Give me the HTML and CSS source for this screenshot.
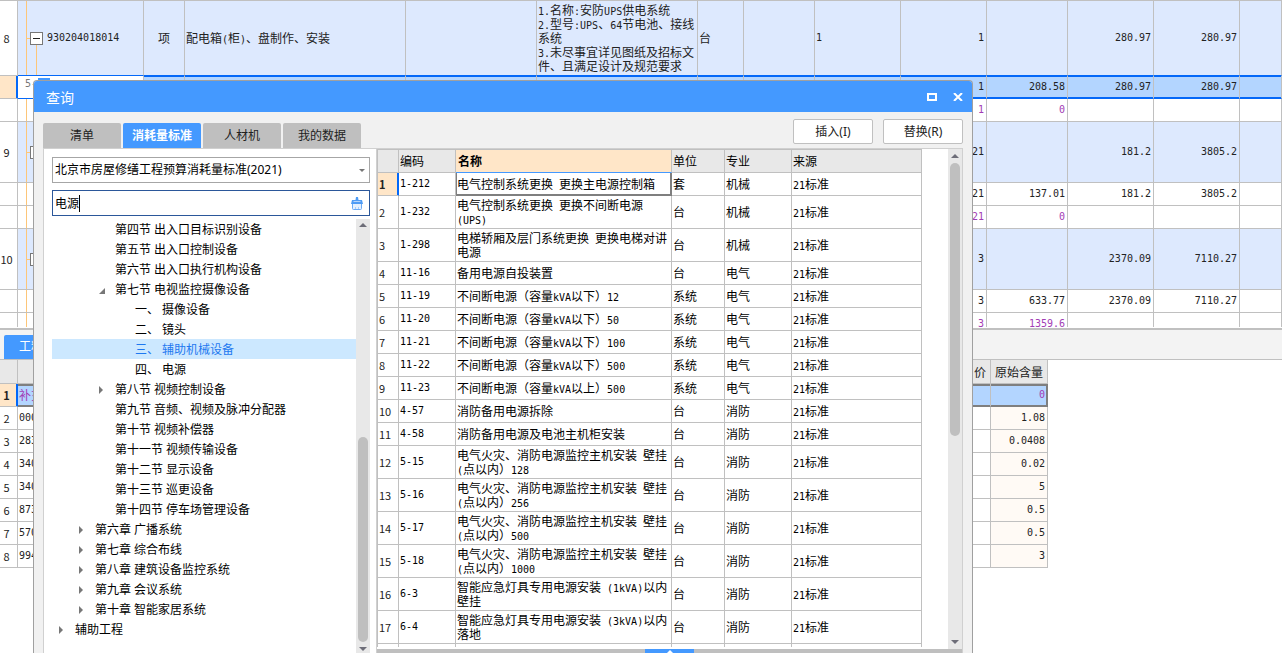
FILE: index.html
```html
<!DOCTYPE html>
<html lang="zh-CN">
<head>
<meta charset="utf-8">
<title>查询</title>
<link rel="stylesheet" href="styles.css">
</head>
<body>
<main class="workspace">
  <section class="upper">
    <table class="sheet">
      <colgroup><col class="w-idx"><col class="w-code"><col class="w-type"><col class="w-name"><col class="w-blank"><col class="w-desc"><col class="w-unit"><col class="w-spec"><col class="w-qty"><col class="w-qty"><col class="w-price"><col class="w-qty"><col class="w-qty"><col></colgroup>
      <tbody>
        <tr class="group tall"><td class="idx">8</td><td class="code num"><span class="minus"></span>930204018014</td><td class="mid">项</td><td>配电箱<span class="num">(</span>柜<span class="num">)</span>、盘制作、安装</td><td></td><td class="desc"><span class="num">1.</span>名称<span class="num">:</span>安防<span class="num">UPS</span>供电系统<br><span class="num">2.</span>型号<span class="num">:UPS</span>、<span class="num">64</span>节电池、接线<br>系统<br><span class="num">3.</span>未尽事宜详见图纸及招标文<br>件、且满足设计及规范要求</td><td>台</td><td></td><td class="num">1</td><td class="val">1</td><td class="val"></td><td class="val">280.97</td><td class="val">280.97</td><td></td></tr>
        <tr class="current"><td class="idx"></td><td class="edit num">5-<span class="mark"></span></td><td></td><td></td><td></td><td></td><td></td><td></td><td></td><td class="val">1</td><td class="val">208.58</td><td class="val">280.97</td><td class="val">280.97</td><td></td></tr>
        <tr><td class="idx"></td><td class="code"></td><td></td><td></td><td></td><td></td><td></td><td></td><td></td><td class="val extra">1</td><td class="val extra">0</td><td></td><td></td><td></td></tr>
        <tr class="group medium"><td class="idx">9</td><td class="code"><span class="minus"></span></td><td></td><td></td><td></td><td></td><td></td><td></td><td></td><td class="val">21</td><td></td><td class="val">181.2</td><td class="val">3805.2</td><td></td></tr>
        <tr><td class="idx"></td><td class="code"></td><td></td><td></td><td></td><td></td><td></td><td></td><td></td><td class="val">21</td><td class="val">137.01</td><td class="val">181.2</td><td class="val">3805.2</td><td></td></tr>
        <tr><td class="idx"></td><td class="code"></td><td></td><td></td><td></td><td></td><td></td><td></td><td></td><td class="val extra">21</td><td class="val extra">0</td><td></td><td></td><td></td></tr>
        <tr class="group medium"><td class="idx">10</td><td class="code"><span class="minus"></span></td><td></td><td></td><td></td><td></td><td></td><td></td><td></td><td class="val">3</td><td></td><td class="val">2370.09</td><td class="val">7110.27</td><td></td></tr>
        <tr><td class="idx"></td><td class="code"></td><td></td><td></td><td></td><td></td><td></td><td></td><td></td><td class="val">3</td><td class="val">633.77</td><td class="val">2370.09</td><td class="val">7110.27</td><td></td></tr>
        <tr><td class="idx"></td><td class="code"></td><td></td><td></td><td></td><td></td><td></td><td></td><td></td><td class="val extra">3</td><td class="val extra">1359.6</td><td></td><td></td><td></td></tr>
      </tbody>
    </table>
  </section>
  <section class="lower">
    <div class="lower-tabs"><button class="lower-tab">工料机显示</button></div>
    <table class="detail">
      <colgroup><col class="w-idx"><col><col class="w-cost"><col class="w-content"></colgroup>
      <thead><tr><th class="idx"></th><th></th><th>价</th><th>原始含量</th></tr></thead>
      <tbody>
        <tr class="picked"><td class="idx">1</td><td class="extra">补充</td><td></td><td class="val extra">0</td></tr>
        <tr><td class="idx">2</td><td class="num">000</td><td></td><td class="val">1.08</td></tr>
        <tr><td class="idx">3</td><td class="num">283</td><td></td><td class="val">0.0408</td></tr>
        <tr><td class="idx">4</td><td class="num">340</td><td></td><td class="val">0.02</td></tr>
        <tr><td class="idx">5</td><td class="num">340</td><td></td><td class="val">5</td></tr>
        <tr><td class="idx">6</td><td class="num">873</td><td></td><td class="val">0.5</td></tr>
        <tr><td class="idx">7</td><td class="num">570</td><td></td><td class="val">0.5</td></tr>
        <tr><td class="idx">8</td><td class="num">994</td><td></td><td class="val">3</td></tr>
      </tbody>
    </table>
  </section>
</main>

<section class="dialog" role="dialog" aria-labelledby="dialog-title">
  <header class="titlebar">
    <h1 id="dialog-title">查询</h1>
    <button class="win-btn" aria-label="最大化"><svg width="10" height="8" viewBox="0 0 10 8"><path d="M1 1H9V7H1Z" fill="none" stroke="#fff" stroke-width="2"/></svg></button>
    <button class="win-btn" aria-label="关闭"><svg width="10" height="8" viewBox="0 0 10 8"><path d="M1 0L9 8M9 0L1 8" stroke="#fff" stroke-width="2"/></svg></button>
  </header>
  <div class="toolbar">
    <nav class="tabs"><button class="tab">清单</button><button class="tab active">消耗量标准</button><button class="tab">人材机</button><button class="tab">我的数据</button></nav>
    <div class="actions"><button class="action">插入(I)</button><button class="action">替换(R)</button></div>
  </div>
  <div class="content">
    <aside class="side">
      <div class="picker">
        <select class="library" aria-label="标准库"><option>北京市房屋修缮工程预算消耗量标准(2021)</option></select>
        <svg class="chevron" width="6" height="3" viewBox="0 0 6 3"><path d="M0 0H6L3 3Z" fill="#777"/></svg>
      </div>
      <div class="search">
        <input type="text" value="电源" aria-label="搜索"><span class="caret"></span>
        <button class="clear" aria-label="清除"><svg width="12" height="13" viewBox="0 0 12 13"><path d="M5 0H7L7.500 3H11L12 7H0L1 3H4.500Z" fill="#4f9cf5"/><path d="M2.500 4.500H9.500" stroke="#b4d4fb"/><path d="M1.500 7V11.500Q1.500 12.500 2.500 12.500H9.500Q10.500 12.500 10.500 11.500V7" fill="#e4f0fe" stroke="#6aaaf6"/><path d="M4.500 12V10M7.500 12V10" stroke="#a9cdfb"/></svg></button>
      </div>
      <div class="tree-pane">
        <ul class="tree">
          <li class="l3">第四节 出入口目标识别设备</li>
          <li class="l3">第五节 出入口控制设备</li>
          <li class="l3">第六节 出入口执行机构设备</li>
          <li class="l3 open">第七节 电视监控摄像设备</li>
          <li class="l4">一、 摄像设备</li>
          <li class="l4">二、 镜头</li>
          <li class="l4 chosen">三、 辅助机械设备</li>
          <li class="l4">四、 电源</li>
          <li class="l3 shut">第八节 视频控制设备</li>
          <li class="l3">第九节 音频、视频及脉冲分配器</li>
          <li class="l3">第十节 视频补偿器</li>
          <li class="l3">第十一节 视频传输设备</li>
          <li class="l3">第十二节 显示设备</li>
          <li class="l3">第十三节 巡更设备</li>
          <li class="l3">第十四节 停车场管理设备</li>
          <li class="l2 shut">第六章 广播系统</li>
          <li class="l2 shut">第七章 综合布线</li>
          <li class="l2 shut">第八章 建筑设备监控系统</li>
          <li class="l2 shut">第九章 会议系统</li>
          <li class="l2 shut">第十章 智能家居系统</li>
          <li class="l1 shut">辅助工程</li>
        </ul>
        <div class="scroll tree-scroll"><i class="up"></i><i class="gap"></i><i class="thumb"></i><i class="down"></i></div>
      </div>
    </aside>
    <div class="results">
      <div class="result-pane">
        <div class="result-view">
          <table class="grid">
            <colgroup><col class="g-idx"><col class="g-code"><col class="g-name"><col class="g-unit"><col class="g-major"><col></colgroup>
            <thead><tr><th></th><th>编码</th><th class="sorted">名称</th><th>单位</th><th>专业</th><th>来源</th></tr></thead>
            <tbody>
              <tr class="focus"><td class="idx">1</td><td class="num">1-212</td><td>电气控制系统更换&ensp;更换主电源控制箱</td><td>套</td><td>机械</td><td><span class="num">21</span>标准</td></tr>
              <tr class="double"><td class="idx">2</td><td class="num">1-232</td><td>电气控制系统更换&ensp;更换不间断电源<br><span class="num">(UPS)</span></td><td>台</td><td>机械</td><td><span class="num">21</span>标准</td></tr>
              <tr class="double"><td class="idx">3</td><td class="num">1-298</td><td>电梯轿厢及层门系统更换&ensp;更换电梯对讲<br>电源</td><td>台</td><td>机械</td><td><span class="num">21</span>标准</td></tr>
              <tr><td class="idx">4</td><td class="num">11-16</td><td>备用电源自投装置</td><td>台</td><td>电气</td><td><span class="num">21</span>标准</td></tr>
              <tr><td class="idx">5</td><td class="num">11-19</td><td>不间断电源（容量<span class="num">kVA</span>以下）<span class="num">12</span></td><td>系统</td><td>电气</td><td><span class="num">21</span>标准</td></tr>
              <tr><td class="idx">6</td><td class="num">11-20</td><td>不间断电源（容量<span class="num">kVA</span>以下）<span class="num">50</span></td><td>系统</td><td>电气</td><td><span class="num">21</span>标准</td></tr>
              <tr><td class="idx">7</td><td class="num">11-21</td><td>不间断电源（容量<span class="num">kVA</span>以下）<span class="num">100</span></td><td>系统</td><td>电气</td><td><span class="num">21</span>标准</td></tr>
              <tr><td class="idx">8</td><td class="num">11-22</td><td>不间断电源（容量<span class="num">kVA</span>以下）<span class="num">500</span></td><td>系统</td><td>电气</td><td><span class="num">21</span>标准</td></tr>
              <tr><td class="idx">9</td><td class="num">11-23</td><td>不间断电源（容量<span class="num">kVA</span>以上）<span class="num">500</span></td><td>系统</td><td>电气</td><td><span class="num">21</span>标准</td></tr>
              <tr><td class="idx">10</td><td class="num">4-57</td><td>消防备用电源拆除</td><td>台</td><td>消防</td><td><span class="num">21</span>标准</td></tr>
              <tr><td class="idx">11</td><td class="num">4-58</td><td>消防备用电源及电池主机柜安装</td><td>台</td><td>消防</td><td><span class="num">21</span>标准</td></tr>
              <tr class="double"><td class="idx">12</td><td class="num">5-15</td><td>电气火灾、消防电源监控主机安装&ensp;壁挂<br><span class="num">(</span>点以内）<span class="num">128</span></td><td>台</td><td>消防</td><td><span class="num">21</span>标准</td></tr>
              <tr class="double"><td class="idx">13</td><td class="num">5-16</td><td>电气火灾、消防电源监控主机安装&ensp;壁挂<br><span class="num">(</span>点以内）<span class="num">256</span></td><td>台</td><td>消防</td><td><span class="num">21</span>标准</td></tr>
              <tr class="double"><td class="idx">14</td><td class="num">5-17</td><td>电气火灾、消防电源监控主机安装&ensp;壁挂<br><span class="num">(</span>点以内）<span class="num">500</span></td><td>台</td><td>消防</td><td><span class="num">21</span>标准</td></tr>
              <tr class="double"><td class="idx">15</td><td class="num">5-18</td><td>电气火灾、消防电源监控主机安装&ensp;壁挂<br><span class="num">(</span>点以内）<span class="num">1000</span></td><td>台</td><td>消防</td><td><span class="num">21</span>标准</td></tr>
              <tr class="double"><td class="idx">16</td><td class="num">6-3</td><td>智能应急灯具专用电源安装<span class="num"> (1kVA)</span>以内<br>壁挂</td><td>台</td><td>消防</td><td><span class="num">21</span>标准</td></tr>
              <tr class="double"><td class="idx">17</td><td class="num">6-4</td><td>智能应急灯具专用电源安装<span class="num"> (3kVA)</span>以内<br>落地</td><td>台</td><td>消防</td><td><span class="num">21</span>标准</td></tr>
              <tr class="double"><td class="idx"></td><td></td><td>智能应急灯具专用电源安装<span class="num"> (5kVA)</span>以内<br>落地</td><td></td><td></td><td></td></tr>
            </tbody>
          </table>
        </div>
        <div class="scroll grid-scroll"><i class="up"></i><i class="thumb"></i><i class="gap"></i><i class="down"></i></div>
      </div>
      <div class="splitter"><button class="expander" aria-label="展开"><svg width="6" height="3" viewBox="0 0 6 3"><path d="M3 0L6 3H0Z" fill="#fff"/></svg></button></div>
    </div>
  </div>
</section>
</body>
</html>
```
FILE: styles.css
```css
* { box-sizing: border-box; }

html, body { height: 100%; }

body {
  margin: 0;
  overflow: hidden;
  background: #fff;
  color: #222;
  font-family: "Noto Sans", "Noto Sans CJK SC", sans-serif;
  font-size: 12px;
  line-height: 14px;
}

button, input, select { font: inherit; }

button { padding: 0; border: 0; }

table {
  border-collapse: separate;
  border-spacing: 0;
  table-layout: fixed;
  font-family: "Noto Sans CJK SC", sans-serif;
}

th, td {
  height: 23px;
  padding: 0 1px;
  border: solid #c0c0c0;
  border-width: 0 1px 1px 0;
  font-weight: normal;
  text-align: left;
  white-space: nowrap;
  overflow: hidden;
}

.num, .val {
  font-family: "DejaVu Sans Mono", monospace;
  font-size: 10px;
}

span.num { line-height: 10px; }

.val {
  padding-right: 2px;
  text-align: right;
}
.extra { color: #a23cb5; }

/* Main worksheet */
.workspace {
  display: flex;
  flex-direction: column;
  height: 100%;
}

.upper {
  flex: 1;
  min-height: 0;
  overflow: hidden;
  border-top: 1px solid #c0c0c0;
}

.sheet { width: 100%; }
.w-idx { width: 18px; }
.w-code { width: 126px; }
.w-type { width: 41px; }
.w-name { width: 221px; }
.w-blank { width: 131px; }
.w-desc { width: 161px; }
.w-unit { width: 46px; }
.w-spec { width: 71px; }
.w-qty { width: 86px; }
.w-price { width: 81px; }
.sheet .mid { text-align: center; }
.sheet .idx, .detail .idx {
  padding: 0 4px 0 0;
  font-size: 11px;
  text-align: center;
}
.tall td { height: 75px; }
.medium td { height: 61px; }
.group td { background: #dde9fe; }
.group .idx { background: #fff; }
.tall td:not(.idx) { border-bottom-color: #0468f8; }

.code { position: relative; }
.sheet .code { padding-left: 29px; }
.code::before {
  content: "";
  position: absolute;
  left: 8px;
  top: 0;
  bottom: -1px;
  width: 1px;
  background: #fdc679;
}
.minus {
  position: absolute;
  left: 12px;
  top: 50%;
  width: 13px;
  height: 13px;
  margin-top: -6px;
  border: 1px solid #777;
  background: linear-gradient(#222, #222) 2px 5px / 7px 1px no-repeat #fff;
}
.minus::before {
  content: "";
  position: absolute;
  right: 12px;
  top: 5px;
  width: 3px;
  height: 1px;
  background: #fdc679;
}
.minus::after {
  content: "";
  position: absolute;
  left: 5px;
  top: 12px;
  width: 1px;
  height: 31px;
  background: #fdc679;
}

.current td {
  background: #b3d5ff;
  border-bottom-color: #0468f8;
  box-shadow: inset 0 1px #0468f8, inset 0 -1px #0468f8;
}
.current .idx {
  background: #ffe6c8;
  border-right-color: #0468f8;
  border-bottom-color: #c0c0c0;
  box-shadow: inset -1px 0 #0468f8;
}
.current .edit {
  position: relative;
  padding: 0 0 6px 7px;
  background: #fff;
  color: #777;
  box-shadow: none;
}
.mark {
  position: absolute;
  left: 20px;
  top: 2px;
  width: 12px;
  height: 3px;
  background: #4499ff;
}

.lower {
  flex: 0 0 326px;
  border-top: 1px solid #fff;
}
.lower-tabs {
  height: 32px;
  padding: 5px 0 0 4px;
  border-top: 2px solid #c0c0c0;
  border-bottom: 1px solid #c0c0c0;
  background: #f3f3f3;
}
.lower-tab {
  width: 90px;
  height: 24px;
  border-radius: 2px 2px 0 0;
  background: #4499ff;
  color: #fff;
}
.detail { width: calc(100% - 234px); }
.w-cost { width: 60px; }
.w-content { width: 57px; }
.detail th {
  height: 24px;
  padding: 0 4px;
  background: #e8e8e8;
  text-align: right;
}
.detail .val { background: #fffaf5; }
.picked td, .detail .picked .val {
  background: #b3d5ff;
  border-bottom-color: #7f7f7f;
  box-shadow: inset 0 2px #7f7f7f, inset 0 -1px #7f7f7f;
}
.detail .picked td:last-child {
  border-right-color: #7f7f7f;
  box-shadow: inset 0 2px #7f7f7f, inset -1px -1px #7f7f7f;
}
.picked .idx, .focus .idx {
  background: #ffe6c8;
  border-right-color: #0468f8;
  border-bottom-color: #c0c0c0;
  box-shadow: inset -1px 0 #0468f8;
  font-weight: bold;
}

/* Query dialog */
.dialog {
  position: absolute;
  left: 33px;
  right: 309px;
  top: 80px;
  bottom: 0;
  display: flex;
  flex-direction: column;
  border: solid #a0a0a0;
  border-width: 1px 1px 0;
  border-radius: 4px 4px 0 0;
  background: #f1f1f1;
  overflow: hidden;
}
.titlebar {
  display: flex;
  align-items: center;
  gap: 16px;
  height: 31px;
  padding: 0 9px 0 12px;
  background: #4499ff;
}
.titlebar h1 {
  flex: 1;
  margin: 0;
  padding-top: 2px;
  color: #fff;
  font-size: 14px;
  font-weight: normal;
  line-height: 20px;
}
.win-btn {
  display: flex;
  background: none;
}
.toolbar {
  display: flex;
  justify-content: space-between;
  height: 36px;
  padding: 7px 9px 0;
}
.tabs {
  display: flex;
  align-items: flex-end;
  gap: 2px;
}
.tab {
  width: 78px;
  height: 25px;
  border-radius: 2px 2px 0 0;
  background: #bfbfbf;
  color: #222;
}
.tab.active {
  background: #4499ff;
  color: #fff;
  font-weight: bold;
}
.actions {
  display: flex;
  gap: 10px;
}
.action {
  width: 80px;
  height: 25px;
  border: 1px solid #c0c0c0;
  border-radius: 2px;
  background: #fff;
  color: #222;
}

.content {
  flex: 1;
  display: flex;
  min-height: 0;
  margin: 0 9px;
  border: solid #d0d0d0;
  border-width: 1px 1px 0;
  background: #fff;
}
.side {
  display: flex;
  flex-direction: column;
  width: 332px;
  padding: 8px 6px 0 8px;
  color: #000;
}
.picker, .search {
  position: relative;
  flex: none;
}
.library {
  display: block;
  width: 100%;
  height: 26px;
  padding: 0 2px;
  appearance: none;
  border: 1px solid #a6a6a6;
  border-radius: 0;
  background: #fff;
  color: #000;
}
.chevron {
  position: absolute;
  right: 5px;
  top: 12px;
}
.search {
  margin: 7px 0 3px;
}
.search input {
  display: block;
  width: 100%;
  height: 26px;
  padding: 0 24px 0 2px;
  border: 1px solid #2b579a;
  outline: 0;
  color: #000;
}
.caret {
  position: absolute;
  left: 27px;
  top: 5px;
  width: 1px;
  height: 17px;
  background: #000;
}
.clear {
  position: absolute;
  right: 7px;
  top: 7px;
  display: flex;
  background: none;
}

.tree-pane {
  flex: 1;
  display: flex;
  min-height: 0;
  overflow: hidden;
}
.tree {
  flex: 1;
  margin: 0;
  padding: 0;
  list-style: none;
  line-height: 20px;
}
.tree li {
  height: 20px;
  padding-top: 1px;
}
.tree .l1 { padding-left: 23px; }
.tree .l2 { padding-left: 43px; }
.tree .l3 { padding-left: 63px; }
.tree .l4 { padding-left: 83px; }
.tree .chosen {
  background: #cce8ff;
  color: #1e78f0;
}
.shut::before, .open::before {
  content: "";
  display: inline-block;
  width: 4px;
  height: 8px;
  margin: 0 12px 0 -16px;
  background: #777;
  clip-path: polygon(0 0, 100% 50%, 0 100%);
}
.open::before {
  width: 6px;
  height: 6px;
  margin: 0 10px 0 -16px;
  clip-path: polygon(100% 0, 100% 100%, 0 100%);
}

.scroll {
  display: flex;
  flex-direction: column;
  align-items: center;
  flex: none;
  width: 14px;
  background: #e8e8e8;
}
.scroll .up, .scroll .down {
  flex: none;
  width: 8px;
  height: 4px;
  margin: 4px 0 5px;
  background: #6d6d78;
  clip-path: polygon(50% 0, 100% 100%, 0 100%);
}
.scroll .down {
  margin: 5px 0 2px;
  clip-path: polygon(0 0, 100% 0, 50% 100%);
}
.grid-scroll .up { margin-top: 5px; }
.grid-scroll .down { margin-bottom: 5px; }
.thumb {
  flex: 1;
  width: 10px;
  border-radius: 5px;
  background: #bfbfbf;
}
.gap { flex: 1; }
.grid-scroll .thumb { flex-grow: 11; }
.grid-scroll .gap { flex-grow: 8; }

.results {
  flex: 1;
  display: flex;
  flex-direction: column;
  min-width: 0;
  border-left: 1px solid #d0d0d0;
}
.result-pane {
  flex: 1;
  display: flex;
  min-height: 0;
}
.result-view {
  flex: 1;
  margin-bottom: 2px;
  padding-right: 26px;
  overflow: hidden;
}
.grid {
  width: 100%;
  border-left: 1px solid #c0c0c0;
  color: #000;
}
.g-idx { width: 21px; }
.g-code { width: 57px; }
.g-name { width: 216px; }
.g-unit { width: 53px; }
.g-major { width: 67px; }
.grid th {
  height: 24px;
  border-top: 1px solid #c0c0c0;
  background: #e8e8e8;
}
.grid .sorted {
  padding-left: 2px;
  background: #ffe6c8;
  border-bottom-color: #4499ff;
  font-weight: bold;
}
.grid .idx {
  color: #222;
  font-size: 11px;
}
.double td { height: 33px; }
.focus td:nth-child(3) {
  border-color: #7f7f7f;
  box-shadow: inset 1px 0 #7f7f7f, inset -1px -1px #7f7f7f;
}
.splitter {
  display: flex;
  justify-content: center;
  flex: none;
  height: 4px;
  background: #bfbfbf;
}
.expander {
  display: flex;
  justify-content: center;
  align-items: center;
  width: 49px;
  height: 4px;
  background: #4499ff;
}
```
